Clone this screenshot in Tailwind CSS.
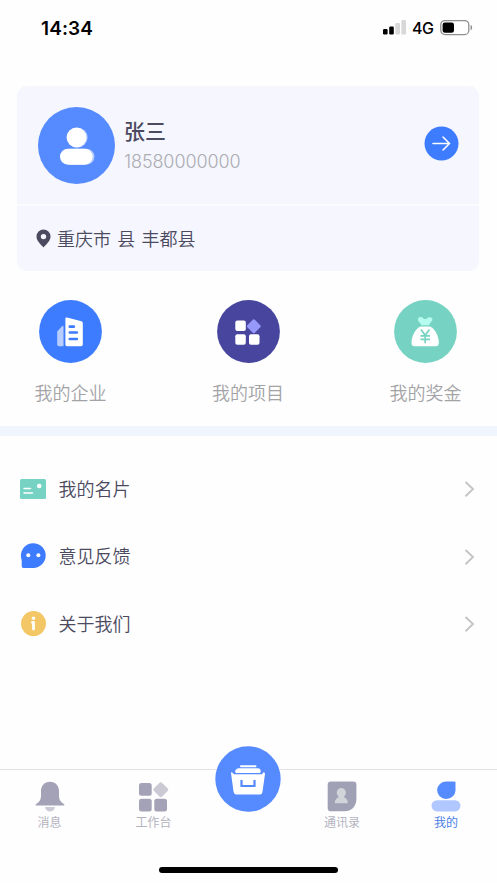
<!DOCTYPE html>
<html lang="zh-CN">
<head>
<meta charset="utf-8">
<title>我的</title>
<script src="https://cdn.jsdelivr.net/npm/@tailwindcss/browser@4"></script>
</head>
<body class="bg-[#fefefe]">
<div class="w-[497px] h-[883px] flex flex-col overflow-hidden font-['Liberation_Sans','Noto_Sans_CJK_SC',sans-serif] text-[#4b4a60]">

  <!-- Status bar -->
  <header class="h-[56px] shrink-0 flex items-center justify-between pl-[41px] pr-[24px] text-black">
    <span class="font-['Inter'] font-semibold text-[19px] leading-none tracking-[0.1px]">14:34</span>
    <div class="flex items-center">
      <svg class="w-[23px] h-[16px]" viewBox="0 0 23 16"><rect x="0" y="9" width="4.6" height="5.5" rx="1.2"/><rect x="6.2" y="6.500" width="4.6" height="8" rx="1.2"/><g fill="#d8d8d8"><rect x="12.4" y="3" width="4.6" height="11.5" rx="1.2"/><rect x="18.4" y="0" width="4.6" height="14.5" rx="1.2"/></g></svg>
      <span class="ml-[6px] w-[22px] font-['Inter'] font-medium text-[16px] leading-none tracking-[-0.4px]">4G</span>
      <svg class="ml-[6px] w-[33px] h-[16px]" viewBox="0 0 33 16"><rect x="0.8" y="0.6" width="28" height="14" rx="4.2" fill="#fff" stroke="#909090" stroke-width="1.3"/><rect x="2.6" y="2.400" width="11.4" height="10.4" rx="2.4"/><path d="M30.6 5c2 .6 2 4.6 0 5.2z" fill="#888"/></svg>
    </div>
  </header>

  <!-- Profile card -->
  <section class="mt-[30px] mx-[17px] w-[462px] h-[185px] shrink-0 rounded-[10px] bg-[#f5f6fe] flex flex-col">
    <div class="h-[120px] flex items-start pl-[21px] pr-[20px] pt-[21px] border-b-2 border-[#fcfcff]">
      <svg class="w-[77px] h-[77px] shrink-0" viewBox="0 0 77 77"><circle cx="38.5" cy="38.5" r="38.5" fill="#568bff"/><g fill="#b9cfff"><circle cx="39.8" cy="30.5" r="9.8"/><rect x="25" y="41.7" width="31.4" height="16" rx="8"/></g><g fill="#fff"><circle cx="38.5" cy="30.5" r="9.9"/><rect x="22" y="41.7" width="32.5" height="16" rx="8"/></g></svg>
      <div class="ml-[9px] pt-[10px] flex-1">
        <div class="text-[21px] leading-[30px] font-medium">张三</div>
        <div class="mt-[3px] text-[18px] leading-[24px] text-[#acacb3] font-['Inter'] font-light tracking-[-0.1px]">18580000000</div>
      </div>
      <svg class="mt-[19px] w-[35px] h-[35px]" viewBox="0 0 35 35" fill="none"><circle cx="17.5" cy="17.5" r="17" fill="#3d7bff"/><path d="M9 17.5h16.5M19 11l6.5 6.5-6.5 6.5" stroke="#fff" stroke-width="1.5" stroke-linecap="round"/></svg>
    </div>
    <div class="flex-1 flex items-center pl-[19px]">
      <svg class="w-[15px] h-[19px]" viewBox="0 0 15 19"><path d="M7.5.5A7 7 0 0 0 .5 7.5C.5 12 5 15.500 7.500 18.500 10 15.500 14.500 12 14.500 7.500A7 7 0 0 0 7.500.5zm0 4.400a2.700 2.700 0 1 1 0 5.400 2.700 2.700 0 0 1 0-5.400z" fill="#4b4a60" fill-rule="evenodd"/></svg>
      <span class="ml-[6px] pt-[2px] text-[18px] leading-[26px] font-[350] [word-spacing:1.3px]">重庆市 县 丰都县</span>
    </div>
  </section>

  <!-- Shortcuts -->
  <nav class="mt-[29px] h-[126px] shrink-0 flex justify-between pl-[34.5px] pr-[35.5px] text-[#a3a3a6] text-[18px] leading-[26px] font-[350]">
    <div class="flex flex-col items-center">
      <svg class="w-[63px] h-[63px]" viewBox="0 0 63 63"><circle cx="31.500" cy="31.500" r="31.400" fill="#3d7bff"/><path d="M18.200 31.500 23 26.200Q24.500 24.800 24.500 27V46.300H20Q18.200 46.300 18.200 44.500z" fill="#b7cdff"/><path d="M26.400 18.500Q26.400 17 28 17.500L42.500 21.300Q43.800 21.700 43.800 23V44.500Q43.800 46.300 42 46.300H28Q26.400 46.300 26.400 44.500z" fill="#fff"/><path d="M30.800 26.700h4M30.800 32.500h7M30.800 39h7" stroke="#3d7bff" stroke-width="2.700" stroke-linecap="round"/></svg>
      <span class="mt-[18px]">我的企业</span>
    </div>
    <div class="flex flex-col items-center">
      <svg class="w-[63px] h-[63px]" viewBox="0 0 63 63"><circle cx="31.500" cy="31.500" r="31.400" fill="#48459f"/><g fill="#fff"><rect x="18.300" y="20.500" width="10.500" height="10.500" rx="2"/><rect x="18.300" y="34.200" width="10.500" height="10.500" rx="2"/><rect x="32" y="34.200" width="10.500" height="10.500" rx="2"/></g><rect x="31.500" y="21" width="10.600" height="10.600" rx="1.500" transform="rotate(45 36.800 26.300)" fill="#9698fa"/></svg>
      <span class="mt-[18px]">我的项目</span>
    </div>
    <div class="flex flex-col items-center">
      <svg class="w-[63px] h-[63px]" viewBox="0 0 63 63"><circle cx="31.500" cy="31.500" r="31.400" fill="#76d3c3"/><path d="M27.500 25.200C25.500 22 23.500 21 24 18.800 25 16.200 28.200 17 29.500 18.500Q31.200 19.500 32.800 18.500C34.500 16.800 37.500 16.500 38.300 18.800 38.700 21 36.500 22 35 25.200z" fill="#b6fbef"/><path d="M26.500 26.500H36C41 28.500 44.800 36 44.800 43Q44.800 46.300 41.500 46.300H20.800Q17.500 46.300 17.500 43C17.500 36 21.500 28.500 26.500 26.500z" fill="#fff"/><path d="M27 29.500l4.200 5.700 4.200-5.700M31.200 35.200v8M26.500 35.800h9.500M26.500 39.300h9.500" fill="none" stroke="#76d3c3" stroke-width="1.700"/></svg>
      <span class="mt-[18px]">我的奖金</span>
    </div>
  </nav>

  <div class="h-[10px] shrink-0 bg-[#f1f5fd]"></div>

  <!-- Menu -->
  <main class="pt-[19px] flex-1 text-[18px] leading-[26px] font-[350]">
    <div class="h-[67.5px] flex items-center pl-[20px] pr-[22.5px]">
      <svg class="w-[26px] h-[20px]" viewBox="0 0 26 20"><rect width="26" height="20" rx="1.500" fill="#76d3c3"/><circle cx="19.200" cy="7" r="2.300" fill="#fff"/><path d="M4 9.500h6.500M4 14h8.500" stroke="#fff" stroke-width="1.500" stroke-linecap="round"/></svg>
      <span class="ml-[12.5px] pt-[2px] flex-1">我的名片</span>
      <svg class="w-[12px] h-[18px]" viewBox="0 0 12 18" fill="none"><path d="M2.500 2l7.500 7-7.500 7.200" stroke="#c4c4c6" stroke-width="1.900"/></svg>
    </div>
    <div class="h-[67.5px] flex items-center pl-[20px] pr-[22.5px]">
      <svg class="w-[26px] h-[26px]" viewBox="0 0 26 26"><path d="M13.300.2A12.400 12.400 0 1 1 13.300 25H3.500Q1.700 25 1.700 23.200V17A12.400 12.400 0 0 1 13.300.2z" fill="#3d7bff"/><circle cx="8.300" cy="12.200" r="2" fill="#fff"/><circle cx="18.400" cy="12.200" r="2" fill="#fff"/></svg>
      <span class="ml-[12.5px] pt-[2px] flex-1">意见反馈</span>
      <svg class="mt-[1px] w-[12px] h-[18px]" viewBox="0 0 12 18" fill="none"><path d="M2.500 2l7.500 7-7.500 7.200" stroke="#c4c4c6" stroke-width="1.900"/></svg>
    </div>
    <div class="h-[67.5px] flex items-center pl-[20px] pr-[22.5px]">
      <svg class="w-[26px] h-[26px]" viewBox="0 0 26 26"><circle cx="13.500" cy="12.600" r="12.500" fill="#f4c766"/><circle cx="13.500" cy="7.300" r="1.700" fill="#fff"/><path d="M12.500 11.500h1v6.500" stroke="#fff" stroke-width="2.800" stroke-linecap="round" stroke-linejoin="round" fill="none"/></svg>
      <span class="ml-[12.5px] pt-[2px] flex-1">关于我们</span>
      <svg class="mt-[1px] w-[12px] h-[18px]" viewBox="0 0 12 18" fill="none"><path d="M2.500 2l7.500 7-7.500 7.200" stroke="#c4c4c6" stroke-width="1.900"/></svg>
    </div>
  </main>

  <!-- Tab bar -->
  <footer class="h-[114px] shrink-0 border-t border-[#e2e2e5] flex flex-col justify-between text-[12px] leading-[18px] text-[#b3b2bf]">
    <div class="flex">
      <div class="w-[99px] pt-[11px] flex flex-col items-center">
        <svg class="w-[30px] h-[32px]" viewBox="0 0 30 32"><path d="M15 .8C9.500.8 6 5 6 10V15C6 19 4 21 1.500 22.800 0 24 .2 24.500 1.500 24.500H28.500C29.800 24.500 30 24 28.500 22.800 26 21 24 19 24 15V10C24 5 20.500.8 15 .8z" fill="#a3a2b6"/><path d="M10 25.900H20C19.500 28.800 17.500 30.400 15 30.400S10.500 28.800 10 25.900z" fill="#cbcad6"/></svg>
        <span class="mt-px">消息</span>
      </div>
      <div class="w-[109px] pt-[11px] flex flex-col items-center">
        <svg class="w-[30px] h-[32px]" viewBox="0 0 30 32"><g fill="#a3a2b6"><rect x="0" y="2" width="12.700" height="12.700" rx="2.500"/><rect x="0" y="17.700" width="12.700" height="12.700" rx="2.500"/><rect x="15.300" y="17.700" width="12.700" height="12.700" rx="2.500"/></g><rect x="16" y="2.900" width="11.600" height="11.600" rx="2" transform="rotate(45 21.800 8.700)" fill="#cbcad4"/></svg>
        <span class="mt-px">工作台</span>
      </div>
      <div class="relative w-[81px]">
        <svg class="absolute left-[7px] -top-[24px] w-[66px] h-[66px]" viewBox="0 0 66 66"><circle cx="33" cy="33" r="32.700" fill="#568bff"/><g fill="#fff"><rect x="25" y="19.200" width="16.500" height="2" rx="1"/><path d="M23.500 22.200H43Q45 22.200 45.500 24H21Q21.500 22.200 23.500 22.200z"/><rect x="20.200" y="23.800" width="25.500" height="3.200" rx="1.200"/><path d="M16 27Q16 26.300 17 26.300L19 28.300H47L48.500 26.300Q50 26.300 50 28L47.500 45.500Q47.200 48.500 45 48.500H21.500Q19 48.500 18.500 45.500z"/></g><path d="M26.500 34V40H39.500V34" fill="none" stroke="#568bff" stroke-width="2.200"/></svg>
      </div>
      <div class="w-[106px] pt-[11px] flex flex-col items-center">
        <svg class="w-[30px] h-[32px]" viewBox="0 0 30 32"><path d="M4 .6H26.200Q29.400.6 29.400 3.800V18C29.400 25.300 24.500 30.300 17.500 30.300H4Q.7 30.300.7 27.200V3.800Q.7.6 4 .6z" fill="#a0a1b5"/><g fill="#d1d4d8"><circle cx="14.300" cy="11.700" r="4.600"/><path d="M11.800 14.700H16.800Q17 16.600 19 17.500 20.800 18.700 20.800 22.300H7.800Q7.800 18.700 9.600 17.500 11.600 16.600 11.800 14.700z"/></g></svg>
        <span class="mt-px">通讯录</span>
      </div>
      <div class="w-[102px] pt-[11px] flex flex-col items-center text-[#4a80e8]">
        <svg class="w-[30px] h-[32px]" viewBox="0 0 30 32"><path d="M15.500.6H23.500Q24.500.6 24.500 1.600V9.500A9.200 8.700 0 1 1 15.500.6z" fill="#568bff"/><rect x=".5" y="19.200" width="29" height="11.200" rx="5.600" fill="#b1c7ff"/></svg>
        <span class="mt-px">我的</span>
      </div>
    </div>
    <div class="mb-[10px] ml-[159px] w-[179px] h-[6px] rounded-full bg-black"></div>
  </footer>
</div>
</body>
</html>
